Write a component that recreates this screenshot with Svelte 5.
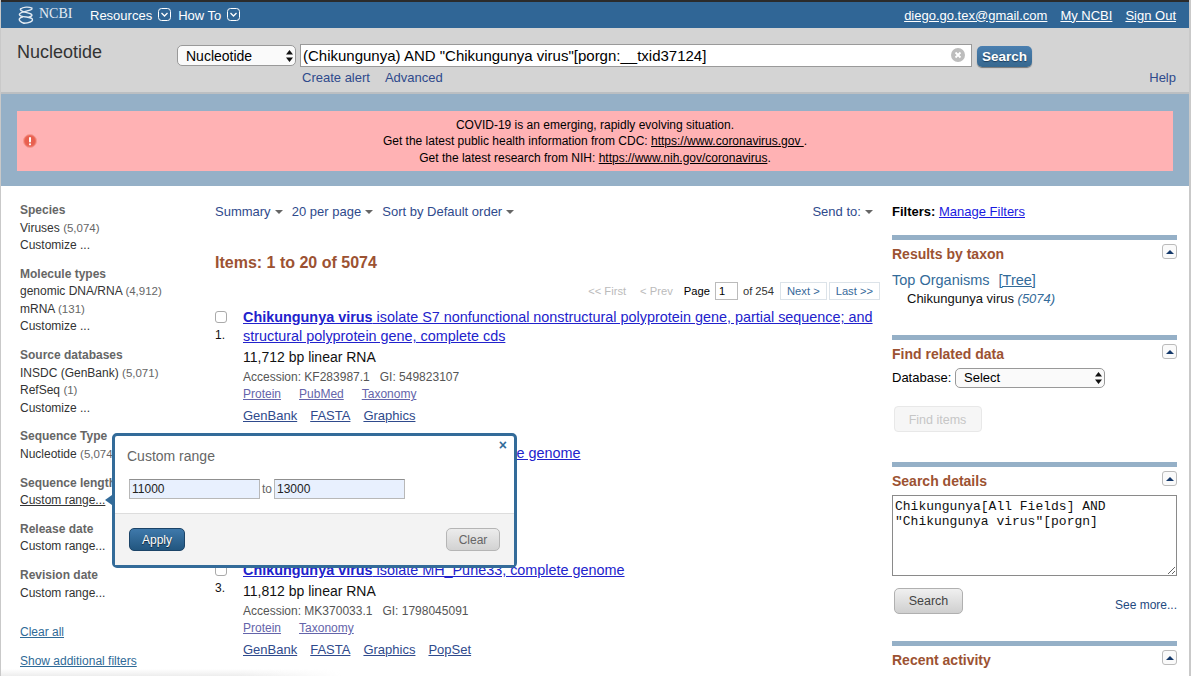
<script>
  const facets = [
    { title: 'Species', items: [['Viruses', '(5,074)'], ['Customize ...']] },
    { title: 'Molecule types', items: [['genomic DNA/RNA', '(4,912)'], ['mRNA', '(131)'], ['Customize ...']] },
    { title: 'Source databases', items: [['INSDC (GenBank)', '(5,071)'], ['RefSeq', '(1)'], ['Customize ...']] },
    { title: 'Sequence Type', items: [['Nucleotide', '(5,074)']] },
    { title: 'Sequence length', items: [['Custom range...']], active: true },
    { title: 'Release date', items: [['Custom range...']] },
    { title: 'Revision date', items: [['Custom range...']] }
  ];
  const results = [
    { n: '1.', bold: 'Chikungunya virus', rest: ' isolate S7 nonfunctional nonstructural polyprotein gene, partial sequence; and structural polyprotein gene, complete cds', bp: '11,712 bp linear RNA', acc: 'KF283987.1', gi: '549823107', rel: ['Protein', 'PubMed', 'Taxonomy'], links: ['GenBank', 'FASTA', 'Graphics'] },
    { n: '2.', bold: 'Chikungunya virus', rest: ' isolate CK18, complete genome', bp: '11,805 bp linear RNA', acc: 'EF210157.2', gi: '157061672', rel: ['Protein', 'Taxonomy'], links: ['GenBank', 'FASTA', 'Graphics'] },
    { n: '3.', bold: 'Chikungunya virus', rest: ' isolate MH_Pune33, complete genome', bp: '11,812 bp linear RNA', acc: 'MK370033.1', gi: '1798045091', rel: ['Protein', 'Taxonomy'], links: ['GenBank', 'FASTA', 'Graphics', 'PopSet'] }
  ];
</script>

<div class="page">
  <header class="topbar">
    <div class="brand">
      <svg width="16" height="18" viewBox="0 0 16 18" fill="none" stroke="#e3ebf3" stroke-width="1.400" stroke-linecap="round">
        <path d="M2.500 3C5 .8 11 .5 14 2.200M14 2.200C15 5 3 5 1.500 8c-.8 2 3 2.500 7 3 3 .4 6.500 1.300 6 3-.6 2-5 3-8.500 3.200" />
        <path d="M2.500 3C1.500 5.500 10 6.500 13 8c2 1.200.5 2.500-2 3.200M4.500 11C1.500 11.800.5 13.500 2 15c1 1 2.500 1.800 4 2.200" />
      </svg>
      <span class="ncbi">NCBI</span>
    </div>
    <span class="menu">Resources</span>
    <svg class="chev" width="14" height="14" viewBox="0 0 14 14" fill="none" stroke="#fff"><rect x=".5" y=".5" width="12" height="12" rx="3" /><path d="M3.500 5l3 3 3-3" stroke-width="1.300" /></svg>
    <span class="menu second">How To</span>
    <svg class="chev" width="14" height="14" viewBox="0 0 14 14" fill="none" stroke="#fff"><rect x=".5" y=".5" width="12" height="12" rx="3" /><path d="M3.500 5l3 3 3-3" stroke-width="1.300" /></svg>
    <nav class="user">
      <a href="#u">diego.go.tex@gmail.com</a>
      <a href="#m">My NCBI</a>
      <a href="#s">Sign Out</a>
    </nav>
  </header>

  <section class="searchbar">
    <div class="dbname">Nucleotide</div>
    <div class="searchcol">
      <div class="searchrow">
        <div class="fake-select dbselect">
          <span>Nucleotide</span>
          <svg width="7" height="12" viewBox="0 0 7 12" fill="#111"><path d="M3.500 0 7 4.500H0zM3.500 12 0 7.500h7z" /></svg>
        </div>
        <div class="term">
          <input value={'(Chikungunya) AND "Chikungunya virus"[porgn:__txid37124]'} />
          <svg class="clear" width="14" height="14" viewBox="0 0 14 14"><circle cx="7" cy="7" r="7" fill="#bdbdbd" /><path d="M4.500 4.500l5 5M9.500 4.500l-5 5" stroke="#fff" stroke-width="1.800" /></svg>
        </div>
        <button class="go">Search</button>
      </div>
      <div class="sublinks">
        <a href="#c">Create alert</a>
        <a href="#a">Advanced</a>
        <a class="help" href="#h">Help</a>
      </div>
    </div>
  </section>

  <section class="banner-wrap">
    <div class="banner">
      <svg class="warn" width="14" height="14" viewBox="0 0 14 14"><circle cx="7" cy="7" r="6.500" fill="#ec6a5e" stroke="#f59a90" /><circle cx="7" cy="7" r="5" fill="#e8604f" /><rect x="6" y="3" width="2" height="5.500" rx="1" fill="#fff" /><circle cx="7" cy="10.300" r="1.100" fill="#fff" /></svg>
      <p>COVID-19 is an emerging, rapidly evolving situation.</p>
      <p>Get the latest public health information from CDC: <a href="#cdc">https://www.coronavirus.gov&nbsp;</a>.</p>
      <p>Get the latest research from NIH: <a href="#nih">https://www.nih.gov/coronavirus</a>.</p>
    </div>
  </section>

  <div class="content">
    <aside class="facets">
      {#each facets as f}
        <div class="facet">
          <h4>{f.title}</h4>
          {#each f.items as it}
            <div class="fitem"><span class:active={f.active}>{it[0]}</span>{#if it[1]}{' '}<span class="count">{it[1]}</span>{/if}</div>
          {/each}
        </div>
      {/each}
      <a class="clearall" href="#ca">Clear all</a>
      <a class="addl" href="#af">Show additional filters</a>
    </aside>

    <main class="results">
      <div class="toolbar">
        <span class="drop">Summary <i></i></span>
        <span class="drop">20 per page <i></i></span>
        <span class="drop">Sort by Default order <i></i></span>
        <span class="drop send">Send to: <i></i></span>
      </div>
      <h2 class="items">Items: 1 to 20 of 5074</h2>
      <div class="pager">
        <span class="off">&lt;&lt; First</span>
        <span class="off prev">&lt; Prev</span>
        <span class="pg">Page</span>
        <input class="pnum" value="1" />
        <span class="of">of 254</span>
        <span class="pbtn">Next &gt;</span>
        <span class="pbtn">Last &gt;&gt;</span>
      </div>
      {#each results as r}
        <article class="rec">
          <div class="mark">
            <span class="cb"></span>
            <span class="num">{r.n}</span>
          </div>
          <div class="body">
            <a class="title" href="#t"><b>{r.bold}</b>{r.rest}</a>
            <div class="bp">{r.bp}</div>
            <div class="acc">Accession: {r.acc}&nbsp;&nbsp; GI: {r.gi}</div>
            <div class="rel">{#each r.rel as l}<a href="#r">{l}</a>{/each}</div>
            <div class="lnk">{#each r.links as l}<a href="#l">{l}</a>{/each}</div>
          </div>
        </article>
      {/each}
    </main>

    <aside class="side">
      <div class="filters"><b>Filters:</b> <a href="#f">Manage Filters</a></div>

      <section class="portlet taxon">
        <h3>Results by taxon</h3>
        <span class="tog"><i></i></span>
        <div class="top"><span>Top Organisms</span> <a href="#tr">[Tree]</a></div>
        <div class="org">Chikungunya virus <em>(5074)</em></div>
      </section>

      <section class="portlet related">
        <h3>Find related data</h3>
        <span class="tog"><i></i></span>
        <div class="dbrow">
          <label for="rel-db">Database:</label>
          <div class="fake-select relselect" id="rel-db">
            <span>Select</span>
            <svg width="7" height="12" viewBox="0 0 7 12" fill="#111"><path d="M3.500 0 7 4.500H0zM3.500 12 0 7.500h7z" /></svg>
          </div>
        </div>
        <button class="finditems">Find items</button>
      </section>

      <section class="portlet details">
        <h3>Search details</h3>
        <span class="tog"><i></i></span>
        <textarea readonly value={'Chikungunya[All Fields] AND "Chikungunya virus"[porgn]'}></textarea>
        <div class="detailrow">
          <button class="gray">Search</button>
          <a href="#sm">See more...</a>
        </div>
      </section>

      <section class="portlet recent">
        <h3>Recent activity</h3>
        <span class="tog"><i></i></span>
      </section>
    </aside>
  </div>

  <div class="popup">
    <span class="arrow"></span>
    <span class="close">×</span>
    <div class="ptop">
      <div class="ptitle">Custom range</div>
      <div class="prange">
        <input value="11000" />
        <span>to</span>
        <input value="13000" />
      </div>
    </div>
    <div class="pfoot">
      <button class="apply">Apply</button>
      <button class="pclear">Clear</button>
    </div>
  </div>

  <div class="fade"></div>
</div>

<style>
  :global(body) { margin: 0; background: #fff; }
  * { box-sizing: border-box; }
  .page {
    position: relative;
    width: 1191px;
    height: 676px;
    overflow: hidden;
    font-family: "Liberation Sans", Arial, sans-serif;
    color: #000;
    background: #fff;
    border-left: 1px solid #c9c9c9;
    border-right: 2px solid #c9c9c9;
  }
  a { color: inherit; }

  .topbar {
    height: 28px;
    margin: 0 -2px 0 -1px;
    padding: 0 15px 0 18px;
    border-top: 2px solid #2b2b2b;
    background: #306696;
    display: flex;
    align-items: center;
    color: #fff;
  }
  .brand { display: flex; align-items: center; width: 72px; }
  .ncbi { font-family: "Liberation Serif", serif; font-size: 14px; color: #e3ebf3; margin-left: 5px; margin-top: -2px; }
  .menu { font-size: 13px; margin-right: 6px; }
  .menu.second { margin-left: 6px; }
  .chev { margin-top: -1px; }
  .user { margin-left: auto; display: flex; gap: 13px; font-size: 13px; }

  .searchbar {
    height: 66px;
    margin: 0 -2px 0 -1px;
    background: #d4d4d4;
    border-bottom: 2px solid #bcbfc2;
    display: flex;
    padding-left: 17px;
  }
  .dbname { width: 160px; font-size: 18px; color: #333; margin-top: 14px; }
  .searchcol { width: 999px; padding-top: 16px; }
  .searchrow { display: flex; align-items: flex-start; }
  .fake-select {
    display: flex; align-items: center; justify-content: space-between;
    background: #fafafa;
    border: 1px solid #999;
    border-radius: 5px;
    font-size: 14px;
  }
  .dbselect { width: 119px; height: 21px; margin-top: 1px; padding: 0 2px 0 8px; }
  .term { position: relative; width: 672px; margin-left: 4px; }
  .term input {
    display: block; width: 100%; height: 23px;
    border: 1px solid #9a9a9a; padding: 0 24px 0 2px;
    background: #fff; font: 15px "Liberation Sans", Arial, sans-serif; color: #000; border-radius: 0; outline: 0;
  }
  .clear { position: absolute; right: 7px; top: 4px; }
  .go {
    width: 55px; height: 21px; margin: 2px 0 0 5px; padding: 0;
    border: 0; border-radius: 5px;
    background: linear-gradient(#4a7fb0, #37688f);
    box-shadow: 0 1px 1px #777;
    color: #fff; font: bold 13.500px "Liberation Sans", Arial, sans-serif;
    text-shadow: 0 1px 1px #1d3d5a;
  }
  .sublinks { display: flex; font-size: 13px; color: #2f4a8c; margin-top: 3px; padding-left: 125px; }
  .sublinks a { text-decoration: none; margin-right: 15px; }
  .sublinks .help { margin: 0 0 0 auto; }

  .banner-wrap { height: 92px; margin: 0 -2px 0 -1px; background: #95b0c7; padding: 17px 18px 0 17px; }
  .banner { position: relative; height: 60px; background: #ffb2b4; text-align: center; font-size: 12px; line-height: 16.500px; padding-top: 5.500px; }
  .banner p { margin: 0; }
  .warn { position: absolute; left: 6px; top: 23px; }

  .content { display: flex; height: 490px; }
  .facets { width: 214px; padding: 15px 0 0 19px; font-size: 12px; color: #333; flex: none; }
  .facet { margin-bottom: 10.800px; }
  .facet h4 { margin: 0; font-size: 12px; line-height: 18px; color: #666; font-weight: bold; }
  .fitem { line-height: 17.500px; position: relative; top: .5px; }
  .active { text-decoration: underline; }
  .count { color: #666; font-size: 11.500px; }
  .clearall, .addl { display: block; color: #2f6a97; line-height: 17px; }
  .clearall { margin-top: 22.500px; }
  .addl { margin-top: 12px; }

  .results { width: 665px; flex: none; padding-top: 17px; }
  .toolbar { display: flex; font-size: 13px; color: #2f4a8c; line-height: 18px; gap: 9px; padding-right: 7px; }
  .drop i {
    display: inline-block; border: 4px solid transparent; border-top-color: #666; border-bottom: 0;
    vertical-align: 2px; margin-left: .5px;
  }
  .send { margin-left: auto; }
  .items { margin: 32px 0 0; font-size: 16px; line-height: 20px; font-weight: bold; color: #9c5232; }
  .pager { display: flex; justify-content: flex-end; align-items: center; font-size: 11.200px; margin-top: 9px; height: 18px; }
  .off { color: #bbb; margin-right: 14px; }
  .prev { margin-right: 11px; }
  .pg { margin-right: 5px; }
  .pnum { width: 23px; height: 18px; border: 1px solid #bbb; padding: 0 3px; font: 11px "Liberation Sans", Arial, sans-serif; color: #000; border-radius: 0; outline: 0; }
  .of { margin: 0 4px 0 5px; color: #333; }
  .pbtn { border: 1px solid #dce3e9; height: 18px; line-height: 16px; padding: 0 6px; color: #36699a; margin-left: 2px; }

  .rec { display: flex; margin-top: 8px; margin-bottom: 19px; }
  .rec + .rec { margin-top: 0; }
  .mark { width: 28px; display: flex; flex-direction: column; flex: none; }
  .cb { width: 12px; height: 12px; border: 1px solid #aaa; border-radius: 3px; background: #fff; margin-top: 3px; }
  .num { font-size: 12px; line-height: 14px; margin-top: 5px; color: #111; }
  .body { flex: 1; min-width: 0; }
  .title { display: block; font-size: 14.400px; line-height: 19px; color: #2222cc; margin-right: -8px; }
  .bp { font-size: 14px; line-height: 20px; margin-top: 1px; color: #111; }
  .acc { font-size: 12px; line-height: 17px; color: #555; margin-top: 2px; }
  .rel { font-size: 12px; line-height: 16px; color: #6464aa; display: flex; gap: 18px; margin-top: 0; }
  .lnk { font-size: 13px; line-height: 18px; color: #2f4a8c; display: flex; gap: 13px; margin-top: 5px; }

  .side { width: 285px; margin-left: 12px; flex: none; padding-top: 17px; font-size: 13px; }
  .filters { line-height: 18px; color: #000; }
  .filters a { color: #1a1ae0; }
  .portlet { position: relative; border-top: 5px solid #95b0c7; }
  .portlet h3 { margin: 0; padding-top: 5px; font-size: 14px; line-height: 18px; font-weight: bold; color: #9c5232; }
  .tog { position: absolute; right: 0; top: 4px; width: 15px; height: 15px; border: 1px solid #bbb; border-radius: 3px; background: #fafafa; display: flex; align-items: center; justify-content: center; }
  .tog i { border: 4px solid transparent; border-bottom: 4px solid #14386a; border-top: 0; }
  .taxon { margin-top: 14px; height: 100px; }
  .top { font-size: 14.500px; color: #336b99; line-height: 18px; margin-top: 8px; }
  .top a { margin-left: 5px; }
  .org { font-size: 13px; line-height: 18px; padding-left: 15px; color: #111; margin-top: 1px; }
  .org em { color: #336b99; }
  .related { height: 127px; }
  .dbrow { display: flex; align-items: center; font-size: 13px; margin-top: 5px; height: 20px; }
  .dbrow label { width: 63px; margin-top: -2px; }
  .relselect { width: 150px; height: 20px; padding: 0 2px 0 8px; font-size: 13px; }
  .relselect span { margin-top: -2px; }
  .finditems {
    display: block; width: 88px; height: 26px; margin: 18px 0 0 2px; padding: 2px 1px 0 0;
    background: #f6f6f6; border: 1px solid #e8e8e8; border-radius: 4px;
    color: #c6c6c6; font: 12.500px "Liberation Sans", Arial, sans-serif;
  }
  .details { height: 179px; }
  textarea {
    display: block; width: 285px; height: 81px; margin-top: 5px; padding: 3px 2px;
    border: 1px solid #8a8a8a; border-radius: 0; outline: 0;
    font: 13px/15px "Liberation Mono", "Courier New", monospace; color: #111; background: #fff;
  }
  .detailrow { display: flex; align-items: flex-start; justify-content: space-between; margin-top: 12px; }
  .gray {
    width: 69px; height: 26px; margin-left: 2px; padding: 0;
    border: 1px solid #b0b0b0; border-radius: 5px;
    background: linear-gradient(#f0f0f0, #cfcfcf);
    color: #444; font: 12.500px "Liberation Sans", Arial, sans-serif;
  }
  .detailrow a { margin-top: 10px; color: #1f4a80; text-decoration: none; font-size: 12px; }

  .popup {
    position: absolute; left: 111px; top: 433px; width: 405px; height: 135px;
    border: 3px solid #336b99; border-radius: 5px; background: #fff;
    display: flex; flex-direction: column;
  }
  .arrow {
    position: absolute; left: -10px; top: 59px; width: 0; height: 0;
    border: 5px solid transparent; border-right: 7px solid #336b99; border-left: 0;
  }
  .close { position: absolute; right: 7px; top: 1px; color: #336b99; font-size: 14px; font-weight: bold; line-height: 16px; }
  .ptop { height: 77px; padding: 11px 0 0 12px; }
  .ptitle { font-size: 14px; line-height: 18px; color: #666; }
  .prange { display: flex; align-items: center; margin-top: 14px; margin-left: 2px; font-size: 12px; color: #666; }
  .prange input {
    width: 131px; height: 20px; padding: 0 2px; background: #e8f0fe;
    border: 1px solid #b8b8b8; border-top-color: #8f8f8f; border-radius: 0; outline: 0;
    font: 12px "Liberation Sans", Arial, sans-serif; color: #222;
  }
  .prange span { width: 14px; text-align: center; }
  .pfoot { flex: 1; background: #f3f3f3; border-top: 1px solid #ddd; padding: 14px 14px 0 14px; display: flex; justify-content: space-between; align-items: flex-start; }
  .apply {
    width: 56px; height: 23px; padding: 0; border: 1px solid #1c4468; border-radius: 5px;
    background: linear-gradient(#3f79ab, #22567f); color: #fff;
    font: 12px "Liberation Sans", Arial, sans-serif; text-shadow: 0 1px 1px #123;
  }
  .pclear {
    width: 54px; height: 23px; padding: 0; border: 1px solid #b5b5b5; border-radius: 5px;
    background: linear-gradient(#ececec, #d2d2d2); color: #666;
    font: 12px "Liberation Sans", Arial, sans-serif;
  }
  .fade {
    position: absolute; left: 0; bottom: 0; width: 340px; height: 7px;
    background: linear-gradient(rgba(225, 225, 225, 0), rgba(225, 225, 225, .6));
    -webkit-mask-image: linear-gradient(90deg, #000 70%, transparent);
    mask-image: linear-gradient(90deg, #000 70%, transparent);
    pointer-events: none;
  }
</style>
